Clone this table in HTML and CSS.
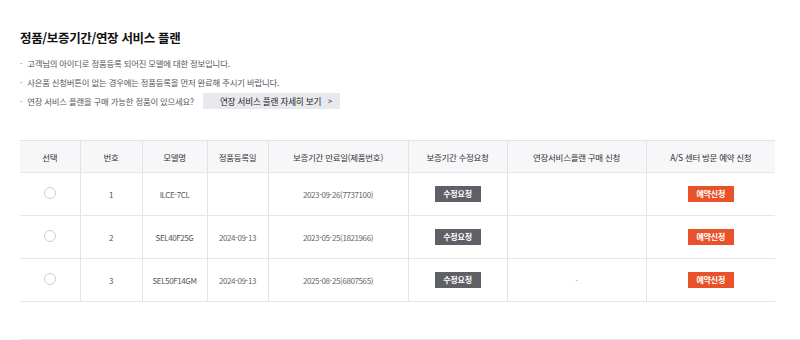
FILE: index.html
```html
<!DOCTYPE html>
<html lang="ko">
<head>
<meta charset="utf-8">
<link rel="stylesheet" href="styles.css">
</head>
<body>
<div class="page">
  <h1 class="title">정품/보증기간/연장 서비스 플랜</h1>
  <ul class="notes">
    <li>고객님의 아이디로 정품등록 되어진 모델에 대한 정보입니다.</li>
    <li>사은품 신청버튼이 없는 경우에는 정품등록을 먼저 완료해 주시기 바랍니다.</li>
    <li class="with-btn">연장 서비스 플랜을 구매 가능한 정품이 있으세요?
      <a class="plan-btn">연장 서비스 플랜 자세히 보기 <span class="arrow">&gt;</span></a>
    </li>
  </ul>
  <table class="list">
    <colgroup>
      <col class="c1"><col class="c2"><col class="c3"><col class="c4"><col class="c5"><col class="c6"><col class="c7"><col class="c8">
    </colgroup>
    <thead>
      <tr>
        <th>선택</th><th>번호</th><th>모델명</th><th>정품등록일</th><th>보증기간 만료일(제품번호)</th><th>보증기간 수정요청</th><th>연장서비스플랜 구매 신청</th><th>A/S 센터 방문 예약 신청</th>
      </tr>
    </thead>
    <tbody>
      <tr>
        <td><span class="radio"></span></td><td>1</td><td>ILCE-7CL</td><td></td><td class="date">2023-09-26(7737100)</td>
        <td><span class="btn gray">수정요청</span></td><td></td><td><span class="btn orange">예약신청</span></td>
      </tr>
      <tr>
        <td><span class="radio"></span></td><td>2</td><td>SEL40F25G</td><td class="date">2024-09-13</td><td class="date">2023-05-25(1821966)</td>
        <td><span class="btn gray">수정요청</span></td><td></td><td><span class="btn orange">예약신청</span></td>
      </tr>
      <tr>
        <td><span class="radio"></span></td><td>3</td><td>SEL50F14GM</td><td class="date">2024-09-13</td><td class="date">2025-08-25(6807565)</td>
        <td><span class="btn gray">수정요청</span></td><td class="dash">-</td><td><span class="btn orange">예약신청</span></td>
      </tr>
    </tbody>
  </table>
  <div class="next-line"></div>
</div>
</body>
</html>
```

FILE: styles.css
```css
* { box-sizing: border-box; }
html, body { margin: 0; padding: 0; background: #fff; }
body {
  font-family: "Noto Sans CJK KR", "Noto Sans", sans-serif;
  color: #333;
  width: 800px;
  height: 340px;
  overflow: hidden;
}
.page { padding: 28px 0 0 20px; }
.title {
  margin: 0;
  font-size: 12.5px;
  line-height: 20px;
  font-weight: 700;
  color: #111;
  letter-spacing: -0.35px;
}
.notes {
  list-style: none;
  margin: 6px 0 0;
  padding: 0;
  font-size: 8.4px;
  color: #555;
  letter-spacing: -0.2px;
}
.notes li {
  height: 18px;
  line-height: 18px;
  margin-bottom: 1px;
  display: flex;
  align-items: center;
}
.notes li:first-child { margin-top: 1px; }
.notes li::before {
  content: "·";
  margin-right: 5px;
  color: #777;
}
.plan-btn {
  margin-left: 9px;
  width: 137px;
  height: 16px;
  background: #e8e9ee;
  color: #222;
  font-size: 8.6px;
  display: flex;
  align-items: center;
  padding-left: 17px;
  letter-spacing: -0.2px;
}
.plan-btn .arrow { margin-left: auto; margin-right: 8px; font-size: 8px; }
.list {
  margin-top: 30px;
  width: 755px;
  table-layout: fixed;
  border-collapse: collapse;
  font-size: 8px;
}
.c1 { width: 60px; } .c2 { width: 62px; } .c3 { width: 65px; } .c4 { width: 61px; }
.c5 { width: 140px; } .c6 { width: 99px; } .c7 { width: 139px; } .c8 { width: 129px; }
.list th, .list td {
  text-align: center;
  padding: 0;
  border-left: 1px solid #e3e3e3;
  border-bottom: 1px solid #e6e6e6;
}
.list th:first-child, .list td:first-child { border-left: none; }
.list thead tr { background: #f7f7f9; border-top: 1px solid #e3e3e8; }
.list th {
  height: 32px;
  font-weight: 400;
  font-size: 8.5px;
  color: #333;
  letter-spacing: -0.3px;
}
.list td {
  height: 43px;
  color: #555;
  letter-spacing: -0.4px;
}
.list td.date { color: #666; }
.list td.dash { color: #999; }
.radio {
  display: inline-block;
  width: 12px;
  height: 12px;
  border: 1px solid #cfcfcf;
  border-radius: 50%;
  vertical-align: middle;
  margin-top: -4px;
}
.btn {
  display: inline-block;
  width: 46px;
  height: 16px;
  line-height: 16px;
  font-size: 8px;
  font-weight: 700;
  color: #fff;
  letter-spacing: -0.2px;
}
.btn.gray { background: #5f6066; }
.btn.orange { background: #e8522a; }
.next-line {
  margin-top: 37px;
  border-top: 1px solid #e6e6e6;
}
```
